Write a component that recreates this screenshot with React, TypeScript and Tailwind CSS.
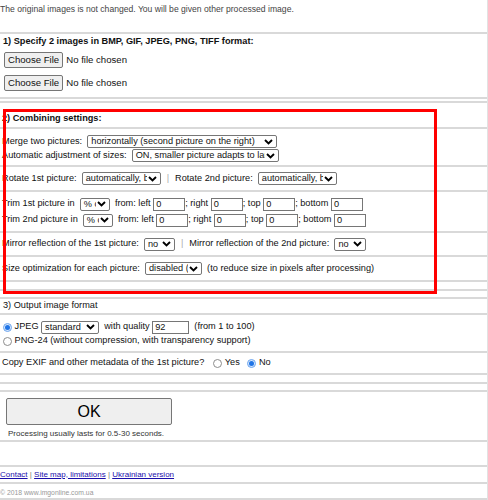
import React from 'react';

// Fake native controls, drawn small like the scaled-down screenshot

function Chevron() {
  return (
    <svg width="9" height="6" viewBox="0 0 9 6" className="shrink-0">
      <path d="M1 1 L4.5 4.5 L8 1" fill="none" stroke="#000" strokeWidth="1.9" />
    </svg>
  );
}

function Select({ text, className }: { text: string; className: string }) {
  return (
    <span
      className={`inline-flex items-center h-[13px] border border-[#767676] rounded-[2px] bg-white align-middle overflow-hidden ${className}`}
    >
      <span className="flex-1 min-w-0 overflow-hidden whitespace-nowrap pl-[3px] leading-[11px]">{text}</span>
      <span className="pl-[1px] pr-[3px] flex items-center bg-white">
        <Chevron />
      </span>
    </span>
  );
}

function Field({ value, className }: { value: string; className: string }) {
  return (
    <span
      className={`inline-flex items-center h-[13px] border border-[#767676] bg-white pl-[2px] align-middle leading-[11px] ${className}`}
    >
      {value}
    </span>
  );
}

function Radio({ checked }: { checked?: boolean }) {
  return checked ? (
    <span className="inline-flex items-center justify-center w-[9px] h-[9px] rounded-full border border-[#6ea6ee] bg-[#d4e5fb] align-middle">
      <span className="w-[5px] h-[5px] rounded-full bg-[#1f74e6]" />
    </span>
  ) : (
    <span className="inline-block w-[9px] h-[9px] rounded-full border border-[#8d8d8d] bg-white align-middle" />
  );
}

function FileButton() {
  return (
    <div className="flex items-center h-[16px] pl-[4px]">
      <span className="inline-flex items-center h-[16px] px-[3px] border border-[#767676] rounded-[2px] bg-[#efefef] text-[9.6px]">
        Choose File
      </span>
      <span className="ml-[3px] text-[9.6px]">No file chosen</span>
    </div>
  );
}

function Sep() {
  return <span className="mx-[6px] text-[#aaa]">|</span>;
}

const line = 'border-b-2 border-[#d9d9d9]';

export default function App() {
  return (
    <div
      className="relative w-[488px] h-[500px] overflow-hidden bg-white border-r border-[#e2e2e2] text-[9.2px] text-[#111]"
      style={{ fontFamily: '"Liberation Sans", Arial, sans-serif' }}
    >
      {/* Intro */}
      <div className={`h-[34px] pt-[4px] ${line}`}>
        <p className="text-[8.6px] leading-[10px] text-[#444]">
          The original images is not changed. You will be given other processed image.
        </p>
      </div>

      {/* 1) Files */}
      <div className={`h-[65px] pt-[1px] ${line}`}>
        <p className="pl-[3px] font-bold leading-[12px]">1) Specify 2 images in BMP, GIF, JPEG, PNG, TIFF format:</p>
        <div className="mt-[5px]">
          <FileButton />
        </div>
        <div className="mt-[7px]">
          <FileButton />
        </div>
      </div>
      <div className={`h-[4px] ${line}`} />

      {/* 2) Combining settings */}
      <div className={`h-[26px] pt-[9px] ${line}`}>
        <p className="pl-[2px] font-bold leading-[12px]">2) Combining settings:</p>
      </div>

      <div className={`h-[38px] pt-[6px] flex flex-col gap-[1px] pl-[2px] ${line}`}>
        <div className="h-[13px] flex items-center whitespace-pre">
          {'Merge two pictures:  '}
          <Select text="horizontally (second picture on the right)" className="w-[190px]" />
        </div>
        <div className="h-[13px] flex items-center whitespace-pre">
          {'Automatic adjustment of sizes:  '}
          <Select text="ON, smaller picture adapts to larger" className="w-[147px]" />
        </div>
      </div>

      <div className={`h-[25px] flex items-center pl-[2px] whitespace-pre ${line}`}>
        {'Rotate 1st picture:  '}
        <Select text="automatically, by EXIF" className="w-[79px]" />
        <Sep />
        {'Rotate 2nd picture:  '}
        <Select text="automatically, by EXIF" className="w-[79px]" />
      </div>

      <div className={`h-[41px] pt-[5px] flex flex-col gap-[2px] pl-[2px] ${line}`}>
        <div className="h-[14px] flex items-center whitespace-pre">
          {'Trim 1st picture in  '}
          <Select text="% of size" className="w-[30px]" />
          {'  from: left '}
          <Field value="0" className="w-[32px]" />
          {'; right '}
          <Field value="0" className="w-[32px]" />
          {'; top '}
          <Field value="0" className="w-[32px]" />
          {'; bottom '}
          <Field value="0" className="w-[32px]" />
        </div>
        <div className="h-[14px] flex items-center whitespace-pre">
          {'Trim 2nd picture in  '}
          <Select text="% of size" className="w-[30px]" />
          {'  from: left '}
          <Field value="0" className="w-[32px]" />
          {'; right '}
          <Field value="0" className="w-[32px]" />
          {'; top '}
          <Field value="0" className="w-[32px]" />
          {'; bottom '}
          <Field value="0" className="w-[32px]" />
        </div>
      </div>

      <div className={`h-[24px] flex items-center pl-[2px] whitespace-pre ${line}`}>
        {'Mirror reflection of the 1st picture:  '}
        <Select text="no" className="w-[31px]" />
        <Sep />
        {'Mirror reflection of the 2nd picture:  '}
        <Select text="no" className="w-[32px]" />
      </div>

      <div className={`h-[25px] flex items-center pl-[2px] whitespace-pre ${line}`}>
        {'Size optimization for each picture:  '}
        <Select text="disabled (by default)" className="w-[57px]" />
        {'  (to reduce size in pixels after processing)'}
      </div>

      <div className={`h-[9px] ${line}`} />
      <div className={`h-[8px] ${line}`} />

      {/* 3) Output */}
      <div className={`h-[16px] flex items-center pl-[3px] ${line}`}>3) Output image format</div>

      <div className={`h-[38px] pt-[5px] pl-[3px] ${line}`}>
        <div className="h-[14px] flex items-center whitespace-pre">
          <Radio checked />
          {' JPEG '}
          <Select text="standard" className="w-[58px]" />
          {'  with quality '}
          <Field value="92" className="w-[37px]" />
          {'  (from 1 to 100)'}
        </div>
        <div className="h-[14px] flex items-center whitespace-pre">
          <Radio />
          {' PNG-24 (without compression, with transparency support)'}
        </div>
      </div>

      <div className={`h-[22px] flex items-center pl-[2px] whitespace-pre ${line}`}>
        {'Copy EXIF and other metadata of the 1st picture?  '}
        <span className="ml-[4px]" />
        <Radio />
        {' Yes   '}
        <Radio checked />
        {' No'}
      </div>

      <div className={`h-[9px] ${line}`} />
      <div className={`h-[8px] ${line}`} />

      {/* Submit */}
      <div className={`h-[50px] pt-[6px] pl-[6px] ${line}`}>
        <div className="w-[166px] h-[27px] flex items-center justify-center border border-[#767676] rounded-[2px] bg-[#efefef] text-[16px] text-black">
          OK
        </div>
        <p className="mt-[4px] pl-[2px] text-[8px] leading-[10px] text-[#333]">
          Processing usually lasts for 0.5-30 seconds.
        </p>
      </div>

      <div className={`h-[25px] ${line}`} />

      {/* Footer */}
      <div className={`h-[17px] flex items-center whitespace-pre text-[8px] text-[#777] ${line}`}>
        <a className="text-[#1a0dab] underline">Contact</a>
        {' | '}
        <a className="text-[#1a0dab] underline">Site map, limitations</a>
        {' | '}
        <a className="text-[#1a0dab] underline">Ukrainian version</a>
      </div>

      <div className={`h-[16px] pt-[4px] text-[6.8px] leading-[9px] text-[#999] ${line}`}>© 2018 www.imgonline.com.ua</div>

      {/* Red annotation frame over section 2 */}
      <div className="absolute left-[3px] top-[109px] w-[434px] h-[185px] border-[3px] border-[#ff0000] pointer-events-none" />
    </div>
  );
}
